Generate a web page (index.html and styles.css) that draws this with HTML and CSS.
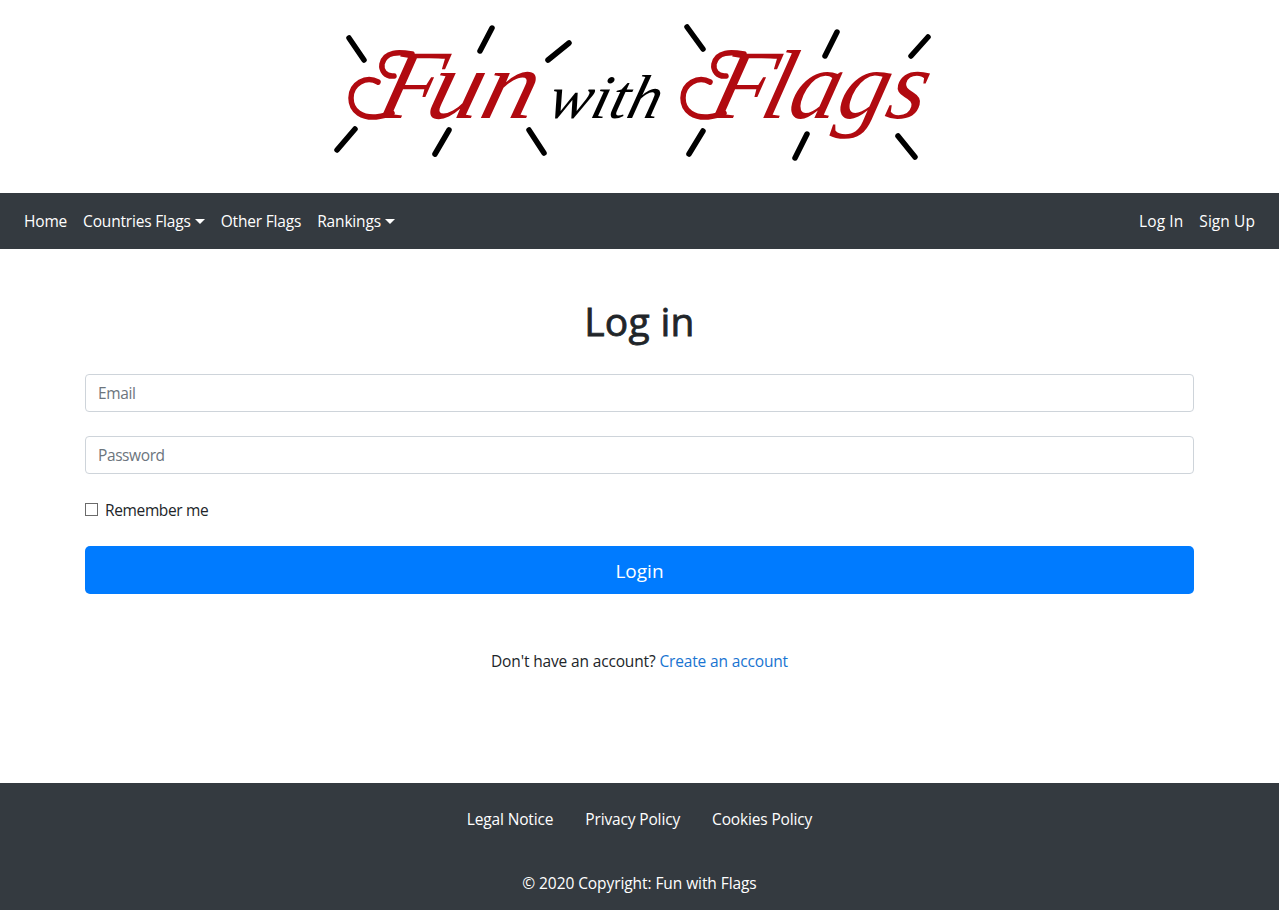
FILE: index.html
```html
<!DOCTYPE html>
<html lang="en">
<head>
<meta charset="utf-8">
<title>Log in - Fun with Flags</title>
<link rel="stylesheet" href="styles.css">
</head>
<body>
<header class="banner">
  <svg class="logo" width="620" height="160" viewBox="325 12 620 160" role="img" aria-label="Fun with Flags">
    <g class="rays">
      <path d="M349 38L364 60M492 28L480 51M569 43L548 60M337 150L355 129M435 154L449 130M529 130L544 153"/>
      <path d="M687 27L703 49M837 32L825 56M928 37L911 56M689 154L703 131M795 158L807 134M898 136L915 157"/>
    </g>
    <g class="swash">
      <path d="M378 82C366 75 351 84 351 98C351 112 363 118 376 117C383 116 388 115 392 113"/>
      <path d="M394 76C385 77 381 70 382 64C385 51 399 52 412 54"/>
      <path d="M710 82C698 75 683 84 683 98C683 112 695 118 708 117C715 116 720 115 724 113"/>
      <path d="M726 76C717 77 713 70 714 64C717 51 731 52 744 54"/>
    </g>
    <g transform="translate(0 118) skewX(-15)">
      <text class="word red"><tspan x="374">F</tspan><tspan x="423" textLength="108" lengthAdjust="spacingAndGlyphs">un</tspan></text>
      <text class="word small" x="545" y="0" textLength="112" lengthAdjust="spacingAndGlyphs">with</text>
      <text class="word red"><tspan x="706">F</tspan><tspan x="758" textLength="163" lengthAdjust="spacingAndGlyphs">lags</tspan></text>
    </g>
  </svg>
</header>
<nav class="navbar">
  <ul class="links">
    <li><a class="nav-link" href="#">Home</a></li>
    <li><a class="nav-link drop" href="#"><span>Countries Flags</span></a></li>
    <li><a class="nav-link" href="#">Other Flags</a></li>
    <li><a class="nav-link drop" href="#"><span>Rankings</span></a></li>
  </ul>
  <ul class="links account">
    <li><a class="nav-link" href="#">Log In</a></li>
    <li><a class="nav-link" href="#">Sign Up</a></li>
  </ul>
</nav>
<main class="container">
  <h1 class="title">Log in</h1>
  <form class="form">
    <input class="field" type="email" placeholder="Email">
    <input class="field" type="password" placeholder="Password">
    <label class="remember"><input class="check" type="checkbox"><span>Remember me</span></label>
    <button class="submit" type="button">Login</button>
  </form>
  <p class="signup">Don't have an account? <a class="create" href="#">Create an account</a></p>
</main>
<footer class="footer">
  <div class="policies">
    <a href="#">Legal Notice</a>
    <a href="#">Privacy Policy</a>
    <a href="#">Cookies Policy</a>
  </div>
  <div class="copyright">© 2020 Copyright: Fun with Flags</div>
</footer>
</body>
</html>
```
FILE: styles.css
```css
* { box-sizing: border-box; }
body {
  margin: 0;
  min-height: 910px;
  display: flex;
  flex-direction: column;
  font: 15.5px/24px "Open Sans", "Noto Sans", sans-serif;
  letter-spacing: -0.15px;
  color: #212529;
  background: #fff;
}
a { color: inherit; text-decoration: none; }
.banner { height: 193px; padding: 12px 0 0 325px; }
.logo { display: block; }
.rays path { fill: none; stroke: #000; stroke-width: 5.5; stroke-linecap: round; }
.swash path { fill: none; stroke: #b10a10; stroke-width: 5.5; stroke-linecap: round; }
.word { font: italic 98px "Liberation Serif", serif; letter-spacing: 0; }
.red { fill: #b10a10; }
.small { font-size: 62px; fill: #000; }
.navbar {
  height: 56px;
  padding: 8px 16px;
  display: flex;
  align-items: center;
  justify-content: space-between;
  background: #343a40;
  color: #fff;
  letter-spacing: -0.18px;
}
.links { display: flex; margin: 0; padding: 0; list-style: none; }
.account { letter-spacing: 0.08px; }
.nav-link { display: flex; align-items: center; padding: 8px; }
.drop::after {
  content: "";
  margin-left: 4px;
  border: 4.8px solid transparent;
  border-width: 5px 5px 0;
  border-top-color: #fff;
}
.container { width: 1139px; margin: 0 auto; padding: 48px 15px 0; flex: 1; }
.title {
  margin: 0 0 29px;
  font-size: 39px;
  line-height: 48px;
  font-weight: 500;
  letter-spacing: 0.3px;
  -webkit-text-stroke: 0.8px #212529;
  text-align: center;
}
.form { display: flex; flex-direction: column; }
.field {
  height: 38px;
  margin: 0 0 24px;
  padding: 6px 12px;
  border: 1px solid #ced4da;
  border-radius: 4px;
  font: inherit;
  letter-spacing: -0.4px;
}
.field::placeholder { color: #6c757d; opacity: 1; }
.remember { display: flex; align-items: center; height: 24px; margin-bottom: 24px; letter-spacing: -0.36px; }
.check {
  appearance: none;
  width: 13px;
  height: 13px;
  margin: 0 7px 1px 0;
  border: 1px solid #6b6b6b;
  background: #fff;
}
.submit {
  height: 48px;
  padding: 2px 0 0;
  border: 0;
  border-radius: 5px;
  background: #007bff;
  color: #fff;
  font: 19px/30px "Open Sans", "Noto Sans", sans-serif;
}
.signup { margin: 55px 0 0; text-align: center; }
.create { color: #1874d1; }
.footer { height: 127px; background: #343a40; color: #fff; padding-top: 24px; text-align: center; }
.policies { display: flex; justify-content: center; gap: 32px; }
.copyright { margin-top: 40px; letter-spacing: -0.08px; }
```
